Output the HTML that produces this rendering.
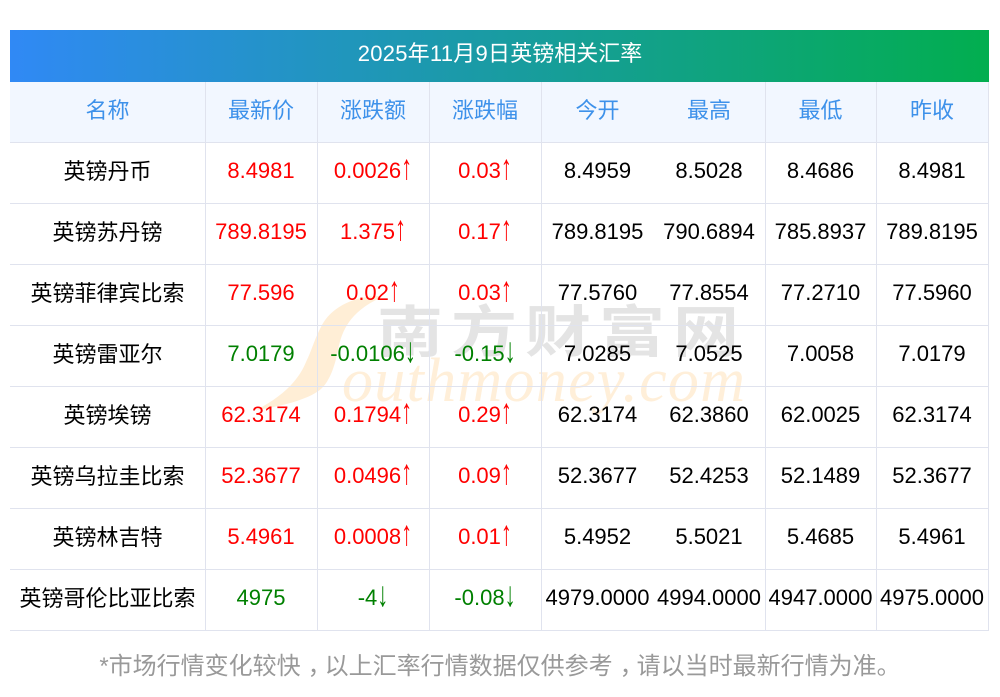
<!DOCTYPE html>
<html lang="zh"><head><meta charset="utf-8"><title>英镑相关汇率</title>
<style>
html,body{margin:0;padding:0;background:#fff}
body{position:relative;width:1000px;height:697px;overflow:hidden;font-family:"Liberation Sans","Noto Sans CJK SC",sans-serif;font-size:22px;color:#000}
.title{position:absolute;left:10px;top:30px;width:978px;padding-left:1px;height:52px;line-height:47px;text-align:center;color:#fff;background:linear-gradient(90deg,#3089f5,#02ae4f)}
.title span{letter-spacing:.25px}
.wm{position:absolute;left:0;top:0;z-index:0}
table{position:absolute;left:10px;top:82px;width:979px;border-collapse:separate;border-spacing:0;table-layout:fixed;z-index:1}
th,td{padding:0 1px 0 0;text-align:center;font-weight:normal;height:60px;border-bottom:1px solid #e0e3ee;border-right:1px solid #e0e3ee;white-space:nowrap;line-height:56px;vertical-align:top}
th{background:#f2f7ff;color:#3d91ea;height:60px;line-height:58px}
td:first-child,th:first-child{padding-right:0}
td:first-child{line-height:58px}
td.n,th.n{border-right:none;padding-right:1px}
.r{color:#f00}.g{color:#008000}
i{font-style:normal;display:inline-block;line-height:22px;transform:translateY(1px) scaleY(1.6);transform-origin:50% 80%}
.foot{position:absolute;left:0;top:649px;width:1000px;text-align:center;font-size:24px;line-height:36px;color:#999;z-index:1}
.foot b{font-weight:normal;position:relative;left:7px}
</style></head><body>
<svg class="wm" width="1000" height="697">
<path d="M380 296C350 296 330 310 322 325C314 340 312 350 306 362C298 382 280 398 256 410C285 406 312 398 322 388C332 378 336 360 338 350C342 330 350 312 380 298Z" fill="#ffeed6"/>
<text transform="translate(377 352) scale(1 .85)" font-family="Noto Sans CJK SC" font-weight="700" font-size="66" letter-spacing="8" fill="#e4e4e4">南方财富网</text>
<text x="342" y="401" font-family="Liberation Serif" font-style="italic" font-size="62" letter-spacing="1.3" fill="#ffefd9">outhmoney.com</text>
</svg>
<div class="title"><span>2025年11月9日</span>英镑相关汇率</div>
<table>
<colgroup><col style="width:196px"><col style="width:112px"><col style="width:112px"><col style="width:112px"><col style="width:112px"><col style="width:112px"><col style="width:111px"><col style="width:112px"></colgroup>
<thead><tr><th>名称</th><th>最新价</th><th>涨跌额</th><th>涨跌幅</th><th class="n">今开</th><th>最高</th><th>最低</th><th>昨收</th></tr></thead>
<tbody>
<tr><td>英镑丹币</td><td class="r">8.4981</td><td class="r">0.0026<i>↑</i></td><td class="r">0.03<i>↑</i></td><td class="n">8.4959</td><td>8.5028</td><td>8.4686</td><td>8.4981</td></tr>
<tr><td>英镑苏丹镑</td><td class="r">789.8195</td><td class="r">1.375<i>↑</i></td><td class="r">0.17<i>↑</i></td><td class="n">789.8195</td><td>790.6894</td><td>785.8937</td><td>789.8195</td></tr>
<tr><td>英镑菲律宾比索</td><td class="r">77.596</td><td class="r">0.02<i>↑</i></td><td class="r">0.03<i>↑</i></td><td class="n">77.5760</td><td>77.8554</td><td>77.2710</td><td>77.5960</td></tr>
<tr><td>英镑雷亚尔</td><td class="g">7.0179</td><td class="g">-0.0106<i>↓</i></td><td class="g">-0.15<i>↓</i></td><td class="n">7.0285</td><td>7.0525</td><td>7.0058</td><td>7.0179</td></tr>
<tr><td>英镑埃镑</td><td class="r">62.3174</td><td class="r">0.1794<i>↑</i></td><td class="r">0.29<i>↑</i></td><td class="n">62.3174</td><td>62.3860</td><td>62.0025</td><td>62.3174</td></tr>
<tr><td>英镑乌拉圭比索</td><td class="r">52.3677</td><td class="r">0.0496<i>↑</i></td><td class="r">0.09<i>↑</i></td><td class="n">52.3677</td><td>52.4253</td><td>52.1489</td><td>52.3677</td></tr>
<tr><td>英镑林吉特</td><td class="r">5.4961</td><td class="r">0.0008<i>↑</i></td><td class="r">0.01<i>↑</i></td><td class="n">5.4952</td><td>5.5021</td><td>5.4685</td><td>5.4961</td></tr>
<tr><td>英镑哥伦比亚比索</td><td class="g">4975</td><td class="g">-4<i>↓</i></td><td class="g">-0.08<i>↓</i></td><td class="n">4979.0000</td><td>4994.0000</td><td>4947.0000</td><td>4975.0000</td></tr>
</tbody></table>
<div class="foot">*市场行情变化较快<b>，</b>以上汇率行情数据仅供参考<b>，</b>请以当时最新行情为准。</div>
</body></html>
